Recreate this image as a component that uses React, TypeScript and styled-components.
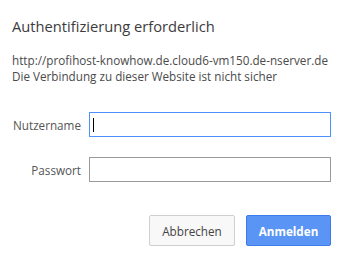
import React from "react";
import styled, { createGlobalStyle } from "styled-components";

const Global = createGlobalStyle`
  html, body { margin: 0; padding: 0; background: #fff; }
  body { font-family: "Open Sans", "Noto Sans", sans-serif; }
`;

const Dialog = styled.div`
  width: 341px;
  height: 256px;
  box-sizing: border-box;
  padding: 16px 10px 0 12px;
  display: flex;
  flex-direction: column;
`;

const Title = styled.div`
  font-size: 14.7px;
  line-height: 20px;
  font-weight: 400;
  color: #3c3c3c;
  white-space: nowrap;
`;

const Info = styled.div`
  margin-top: 16px;
  font-size: 11.7px;
  line-height: 16px;
  color: #4a4a4a;
  white-space: nowrap;
`;

const Form = styled.div`
  margin-top: 28px;
  display: grid;
  grid-template-columns: 69px 1fr;
  column-gap: 8px;
  row-gap: 20px;
  align-items: center;
`;

const Label = styled.label`
  font-size: 11.7px;
  color: #555;
  text-align: right;
  white-space: nowrap;
`;

const Input = styled.div<{ $focused?: boolean }>`
  height: 25px;
  box-sizing: border-box;
  border: 1px solid ${(p) => (p.$focused ? "#4d90fe" : "#9a9a9a")};
  display: flex;
  align-items: center;
  padding-left: 3px;
`;

const Caret = styled.span`
  width: 1px;
  height: 14px;
  background: #000;
`;

const Actions = styled.div`
  margin-top: 33px;
  display: flex;
  justify-content: flex-end;
  gap: 11px;
`;

const Button = styled.button<{ $primary?: boolean }>`
  height: 31px;
  box-sizing: border-box;
  width: ${(p) => (p.$primary ? "85px" : "86px")};
  padding: 0;
  font-family: "Open Sans", "Noto Sans", sans-serif;
  font-size: 11.7px;
  font-weight: ${(p) => (p.$primary ? 700 : 400)};
  color: ${(p) => (p.$primary ? "#fff" : "#444")};
  background: ${(p) => (p.$primary ? "#5a95f5" : "#f8f8f8")};
  border: 1px solid ${(p) => (p.$primary ? "#3b7bea" : "#cfcfcf")};
  border-radius: 2px;
`;

export default function App() {
  return (
    <>
      <Global />
      <Dialog>
        <Title>Authentifizierung erforderlich</Title>
        <Info>
          http://profihost-knowhow.de.cloud6-vm150.de-nserver.de
          <br />
          Die Verbindung zu dieser Website ist nicht sicher
        </Info>
        <Form>
          <Label>Nutzername</Label>
          <Input $focused>
            <Caret />
          </Input>
          <Label>Passwort</Label>
          <Input />
        </Form>
        <Actions>
          <Button>Abbrechen</Button>
          <Button $primary>Anmelden</Button>
        </Actions>
      </Dialog>
    </>
  );
}
